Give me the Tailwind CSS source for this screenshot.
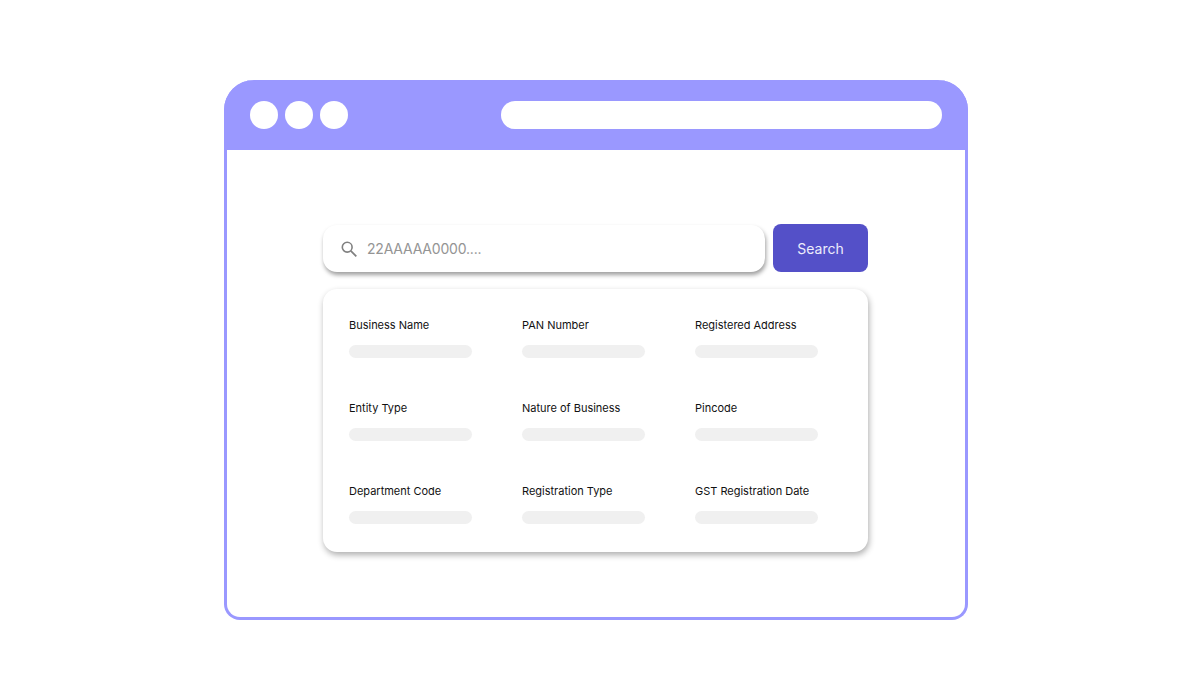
<!DOCTYPE html>
<html>
<head>
<meta charset="utf-8">
<script src="https://cdn.jsdelivr.net/npm/@tailwindcss/browser@4"></script>
</head>
<body class="bg-white font-['Inter',sans-serif]">
<div class="w-[1200px] h-[700px] pt-[80px] pl-[224px] overflow-hidden">
  <div class="w-[744px] h-[540px] flex flex-col rounded-t-[30px] rounded-b-[16px] border-[3px] border-t-0 border-[#9a98ff] bg-white">
    <div class="h-[70px] -mx-[3px] shrink-0 bg-[#9a98ff] rounded-t-[30px] flex items-center pl-[26px] pr-[26px]">
      <div class="flex gap-[7px]">
        <div class="w-[28px] h-[28px] rounded-full bg-white"></div>
        <div class="w-[28px] h-[28px] rounded-full bg-white"></div>
        <div class="w-[28px] h-[28px] rounded-full bg-white"></div>
      </div>
      <div class="ml-[153px] w-[441px] h-[28px] rounded-full bg-white"></div>
    </div>
    <div class="pl-[96px] pt-[74px]">
      <div class="flex gap-[8px] w-[545px] h-[48px]">
        <div class="w-[442px] h-[47px] mt-[1px] rounded-[14px] bg-white shadow-[1px_3px_4px_rgba(0,0,0,0.38)] flex items-center pl-[18px]">
          <svg class="w-[16px] h-[16px]" viewBox="0 0 16 16" fill="none" stroke="#808080" stroke-width="1.6"><circle cx="6.2" cy="6.2" r="4.9"/><path d="M9.8 9.8 L15.3 15.3" stroke-width="1.8"/></svg>
          <span class="ml-[10px] text-[14px] leading-[20px] tracking-[-0.2px] text-[#949494]">22AAAAA0000....</span>
        </div>
        <div class="w-[95px] h-[48px] rounded-[8px] bg-[#5450c8] flex items-center justify-center text-[14px] text-[#ececfb]">Search</div>
      </div>
      <div class="mt-[17px] w-[545px] h-[263px] rounded-[14px] bg-white shadow-[1px_3px_6px_rgba(0,0,0,0.32)] pl-[26px] pt-[29px] grid grid-cols-[173px_173px_173px] auto-rows-[83px] text-[11px] leading-[15px] tracking-[-0.01px] text-[#111111]">
        <div><div>Business Name</div><div class="mt-[12px] w-[123px] h-[13px] rounded-full bg-[#f0f0f0]"></div></div>
        <div><div>PAN Number</div><div class="mt-[12px] w-[123px] h-[13px] rounded-full bg-[#f0f0f0]"></div></div>
        <div><div>Registered Address</div><div class="mt-[12px] w-[123px] h-[13px] rounded-full bg-[#f0f0f0]"></div></div>
        <div><div>Entity Type</div><div class="mt-[12px] w-[123px] h-[13px] rounded-full bg-[#f0f0f0]"></div></div>
        <div><div>Nature of Business</div><div class="mt-[12px] w-[123px] h-[13px] rounded-full bg-[#f0f0f0]"></div></div>
        <div><div>Pincode</div><div class="mt-[12px] w-[123px] h-[13px] rounded-full bg-[#f0f0f0]"></div></div>
        <div><div>Department Code</div><div class="mt-[12px] w-[123px] h-[13px] rounded-full bg-[#f0f0f0]"></div></div>
        <div><div>Registration Type</div><div class="mt-[12px] w-[123px] h-[13px] rounded-full bg-[#f0f0f0]"></div></div>
        <div><div>GST Registration Date</div><div class="mt-[12px] w-[123px] h-[13px] rounded-full bg-[#f0f0f0]"></div></div>
      </div>
    </div>
  </div>
</div>
</body>
</html>
